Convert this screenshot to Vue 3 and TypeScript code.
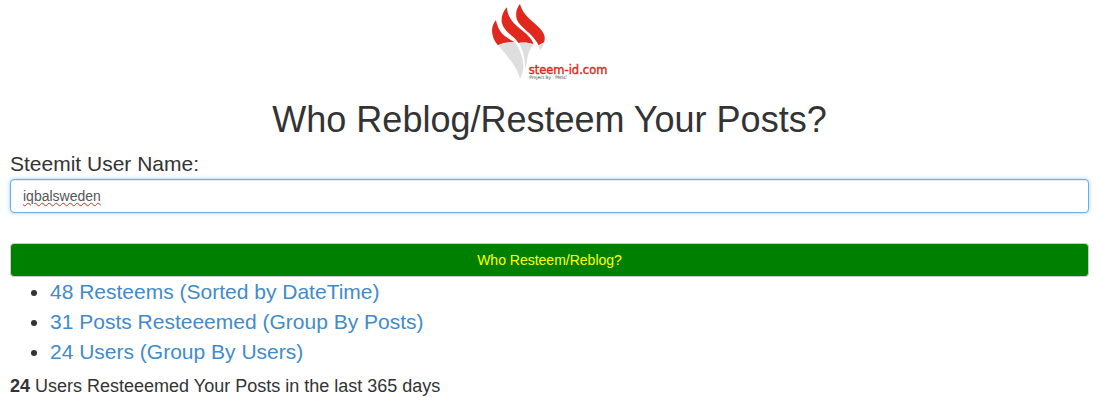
<script setup lang="ts">
const links: string[] = [
  '48 Resteems (Sorted by DateTime)',
  '31 Posts Resteeemed (Group By Posts)',
  '24 Users (Group By Users)',
]
</script>

<template>
  <main class="page">
    <div class="logo-row">
      <svg class="logo" viewBox="0 0 480 270" width="160" height="90" role="img" aria-label="steem-id.com">
        <path class="red" d="M78 60C66 74 64 92 68 106C71 120 78 129 84 136C100 128 116 126 134 127C116 116 98 106 90 92C84 82 80 72 78 60Z" />
        <path class="red" d="M110 22C98 36 92 54 96 70C100 86 114 98 126 108C134 114 140 122 146 129C160 126 176 128 191 133C184 114 168 100 152 88C136 76 122 62 116 46C113 38 111 30 110 22Z" />
        <path class="red" d="M150 12C140 24 136 40 140 56C146 74 164 86 178 100C190 112 200 124 206 136L222 127C228 112 222 100 212 88C198 72 180 60 168 46C160 36 153 24 150 12Z" />
        <path class="gray" d="M84 136C100 129 118 127 136 128C150 148 160 176 160 200C160 214 155 226 150 236C146 216 132 194 116 174C106 160 94 148 84 136Z" />
        <path class="gray" d="M148 130C162 127 176 128 190 134C178 148 172 166 171 184C170 192 168 200 165 206C166 184 160 152 148 130Z" />
        <path class="gray" d="M206 137L222 128C220 136 216 144 210 151Z" />
        <text class="brand" x="176" y="221">steem-id.com</text>
        <text class="credit" x="178" y="236">Project By : PNSC</text>
      </svg>
    </div>
    <h1 class="title">Who Reblog/Resteem Your Posts?</h1>
    <form class="form" @submit.prevent>
      <label class="label">Steemit User Name:</label>
      <div class="input"><span class="typed">iqbalsweden</span></div>
      <button class="submit" type="submit">Who Resteem/Reblog?</button>
    </form>
    <ul class="links">
      <li v-for="link in links" :key="link"><a href="#">{{ link }}</a></li>
    </ul>
    <p class="summary"><strong>24</strong> Users Resteeemed Your Posts in the last 365 days</p>
  </main>
</template>

<style>
html, body { background: #fff; }
</style>

<style scoped>
.page {
  box-sizing: border-box;
  width: 1100px;
  height: 400px;
  overflow: hidden;
  padding: 0 11px 0 10px;
  font-family: "Liberation Sans", Arial, sans-serif;
  color: #333;
}
.logo-row { display: flex; justify-content: center; height: 90px; }
.logo { display: block; }
.red { fill: #e0281e; }
.gray { fill: #dedede; }
.brand { font-family: "DejaVu Sans", sans-serif; font-size: 34.5px; stroke: #e0281e; stroke-width: 1.2px; fill: #e0281e; }
.credit { font-family: "DejaVu Sans", sans-serif; font-size: 13px; fill: #777; stroke: #777; stroke-width: .3px; }
.title {
  margin: 10px 0 0;
  text-align: center;
  font-size: 36px;
  font-weight: 500;
  line-height: 40px;
}
.form { display: flex; flex-direction: column; margin-top: 10px; }
.label { font-size: 21px; line-height: 28px; }
.input {
  box-sizing: border-box;
  height: 34px;
  margin-top: 1px;
  padding: 0 12px;
  display: flex;
  align-items: center;
  background: #fff;
  border: 1px solid #66afe9;
  border-radius: 4px;
  box-shadow: inset 0 1px 1px rgba(0, 0, 0, .075), 0 0 4px rgba(102, 175, 233, .6);
  font-size: 14px;
  color: #555;
}
.typed { text-decoration: underline wavy #e0281e 1px; text-underline-offset: 1px; }
.submit {
  height: 34px;
  margin-top: 30px;
  border: 1px solid #ccc;
  border-radius: 4px;
  background: #008000;
  color: #ff0;
  font-family: inherit;
  font-size: 14px;
  padding: 0;
}
.links {
  margin: 0;
  padding: 0 0 0 40px;
  font-size: 21px;
  line-height: 30px;
}
.links a { color: #428bca; text-decoration: none; }
.summary { margin: 8px 0 0; font-size: 18px; line-height: 22px; }
</style>
